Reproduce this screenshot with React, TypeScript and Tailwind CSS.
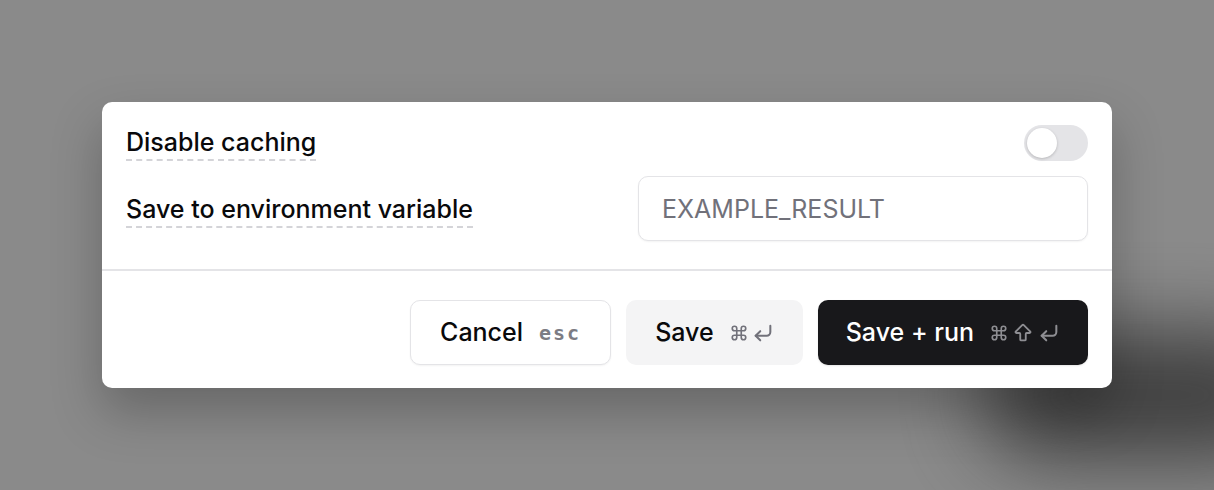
import { Command, ArrowBigUp, CornerDownLeft } from 'lucide-react';

// Modal "cell settings" - caching toggle + env variable + actions

const Kbd = ({ dark, shift }: { dark?: boolean; shift?: boolean }) => (
    <span className={`flex items-center gap-[4px] ${dark ? 'text-[#8e8e93]' : 'text-[#71717a]'}`}>
        <Command className="h-[18px] w-[18px]" strokeWidth={2.2} />
        {shift && <ArrowBigUp className="h-[22px] w-[22px]" strokeWidth={2} />}
        <CornerDownLeft className="h-[22px] w-[22px]" strokeWidth={2.2} />
    </span>
);

export default function App() {
    return (
        <div
            className="relative h-[490px] w-[1214px] overflow-hidden bg-[#8a8a8a] pt-[102px] pl-[102px]"
            style={{ fontFamily: 'Inter, "Noto Sans", sans-serif' }}
        >
            {/* dark blurred blob behind, bottom right */}
            <div className="absolute left-[980px] top-[330px] h-[130px] w-[320px] rounded-full bg-[#2e2e2e] opacity-80 blur-[40px]" />

            {/* Modal */}
            <div className="relative w-[1010px] rounded-[10px] bg-white shadow-[0_24px_50px_rgba(0,0,0,0.25)]">
                <div className="flex flex-col gap-[15px] px-6 pt-[23px] pb-[28px]">
                    {/* Disable caching */}
                    <div className="flex items-center justify-between">
                        <span className="mt-[3px] border-b-2 border-dashed border-[#d4d4d8] pb-[3px] text-[25px] leading-[28px] font-medium text-[#09090b]">
                            Disable caching
                        </span>
                        <button className="flex h-[36px] w-[64px] items-center rounded-full bg-[#e4e4e7] p-[3px]">
                            <span className="h-[30px] w-[30px] rounded-full bg-white shadow-[0_1px_3px_rgba(0,0,0,0.2)]" />
                        </button>
                    </div>

                    {/* Save to env variable */}
                    <div className="flex items-center justify-between">
                        <span className="mt-[6px] border-b-2 border-dashed border-[#d4d4d8] pb-[3px] text-[25px] leading-[28px] font-medium text-[#09090b]">
                            Save to environment variable
                        </span>
                        <input
                            placeholder="EXAMPLE_RESULT"
                            className="h-[65px] w-[450px] rounded-[10px] border border-[#e4e4e7] bg-white px-[23px] text-[25px] text-[#09090b] shadow-[0_1px_2px_rgba(0,0,0,0.05)] outline-none placeholder:text-[#71717a]"
                        />
                    </div>
                </div>

                <div className="h-[2px] bg-[#e4e4e7]" />

                {/* Footer */}
                <div className="flex justify-end gap-[15px] px-6 pt-[29px] pb-[23px]">
                    <button className="flex h-[65px] items-center gap-4 rounded-[10px] border border-[#e4e4e7] bg-white px-[29px] shadow-[0_1px_2px_rgba(0,0,0,0.05)]">
                        <span className="text-[25px] font-medium text-[#09090b]">Cancel</span>
                        <span className="text-[20px] font-bold tracking-[2px] text-[#7c7c84]" style={{ fontFamily: '"DejaVu Sans Mono", monospace' }}>
                            esc
                        </span>
                    </button>
                    <button className="flex h-[65px] items-center gap-4 rounded-[10px] bg-[#f4f4f5] px-[29px]">
                        <span className="text-[25px] font-medium text-[#09090b]">Save</span>
                        <Kbd />
                    </button>
                    <button className="flex h-[65px] items-center gap-4 rounded-[10px] bg-[#18181b] px-[28px] shadow-[0_1px_2px_rgba(0,0,0,0.1)]">
                        <span className="text-[25px] font-medium text-white">Save + run</span>
                        <Kbd dark shift />
                    </button>
                </div>
            </div>
        </div>
    );
}
